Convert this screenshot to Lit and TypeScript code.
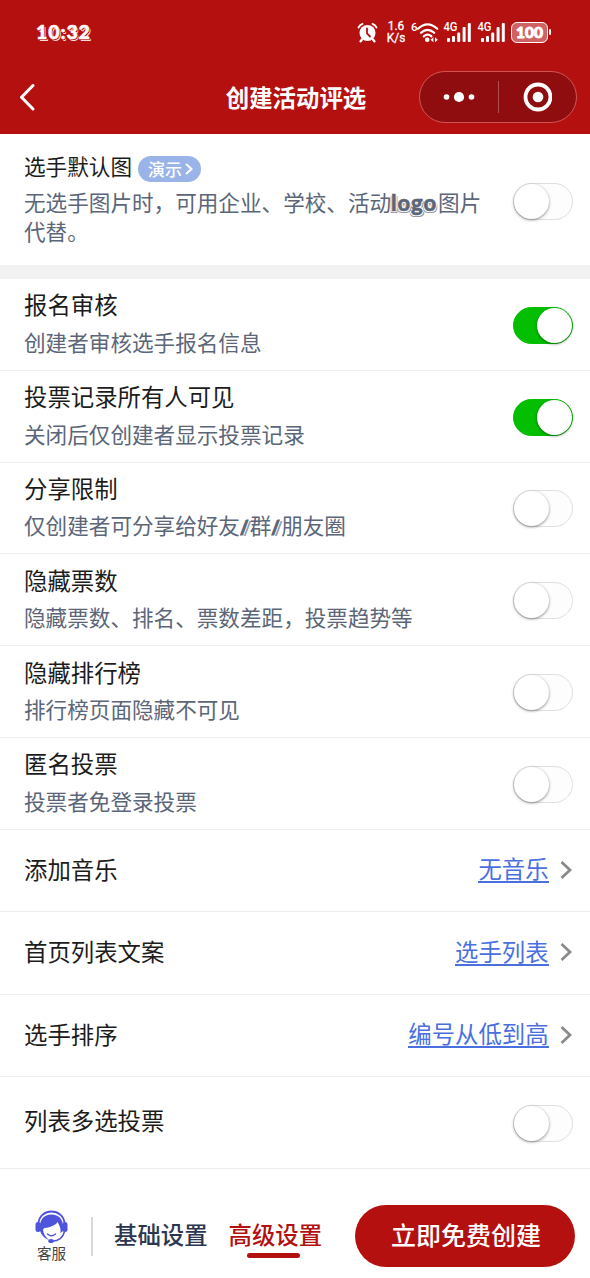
import { LitElement, html, svg, css, nothing } from "lit";
import { customElement, property } from "lit/decorators.js";
import { classMap } from "lit/directives/class-map.js";

const FONT = css`"Noto Sans CJK SC", "Noto Sans", sans-serif`;

@customElement("toggle-switch")
class ToggleSwitch extends LitElement {
  @property({ type: Boolean }) on = false;

  static styles = css`
    :host { display: block; flex: none; }
    .track {
      box-sizing: border-box;
      display: flex;
      width: 60px;
      height: 37px;
      border-radius: 19px;
      border: 1px solid #dfdfdf;
      background: #fdfdfd;
    }
    .knob {
      width: 35px;
      height: 35px;
      border-radius: 50%;
      background: #fff;
      box-shadow: 0 1px 3px rgba(0, 0, 0, 0.45);
    }
    .on { justify-content: flex-end; background: #04be02; border-color: #04be02; }
  `;

  render() {
    return html`<div class=${classMap({ track: true, on: this.on })}><div class="knob"></div></div>`;
  }
}

@customElement("status-bar")
class StatusBar extends LitElement {
  static styles = css`
    :host {
      display: flex;
      align-items: center;
      justify-content: space-between;
      height: 64px;
      padding: 0 39px 0 36px;
      color: #fff;
      font-family: Roboto, sans-serif;
    }
    .time {
      font: 900 19.5px/20px Lato, sans-serif;
      letter-spacing: 0.9px;
      -webkit-text-stroke: 0.5px #fff;
      text-shadow: 1px 1px 0 #b51010, 1.7px 1.5px 0 #ffdcdc;
    }
    .icons { display: flex; align-items: center; }
    .alarm { width: 21px; height: 21px; }
    .speed {
      display: flex;
      flex-direction: column;
      align-items: center;
      width: 24px;
      margin-left: 6px;
      font-size: 12px;
      -webkit-text-stroke: 0.3px #fff;
    }
    .speed span { display: block; line-height: 12px; height: 12px; overflow: hidden; }
    .wifi { width: 27px; height: 21px; margin-left: 4px; overflow: visible; }
    .signal { width: 28px; height: 21px; margin-left: 6px; overflow: visible; }
    .glyph { font: 500 12.5px Roboto, sans-serif; fill: #fff; }
    .small { font-size: 11.5px; }
    .battery { display: flex; align-items: center; margin-left: 4px; }
    .cell {
      box-sizing: border-box;
      width: 37px;
      height: 21px;
      border: 1.5px solid #fff;
      border-radius: 6px;
      background: rgba(255, 255, 255, 0.35);
      font: 900 15.5px/18px Lato, sans-serif;
      letter-spacing: 0;
      text-align: center;
      -webkit-text-stroke: 0.9px #fff;
    }
    .tip { width: 2px; height: 6px; margin-left: 1px; border-radius: 1px; background: #fff; }
  `;

  private signal() {
    return html`<svg class="signal" viewBox="0 0 28 21">
      <text class="glyph" x="-1.5" y="9" textLength="14" lengthAdjust="spacingAndGlyphs">4G</text>
      ${[[2, 16], [7, 14], [12.2, 10.5], [17.6, 5], [22.8, 1]].map(
        ([x, y]) => svg`<rect x=${x} y=${y} width="3" height=${20 - y} rx="1" fill="#fff"/>`
      )}
    </svg>`;
  }

  render() {
    return html`
      <span class="time">10:32</span>
      <div class="icons">
        <svg class="alarm" viewBox="0 0 21 21" fill="none" stroke="#fff" stroke-linecap="round">
          <circle cx="10.5" cy="11" r="8" fill="#fff" stroke="none"/>
          <path d="M1.5 5.5Q2.8 2.8 5.5 1.8M19.5 5.5Q18.2 2.8 15.5 1.8" stroke-width="1.8"/>
          <path d="M5 17.5L3.6 19.2M16 17.5L17.4 19.2" stroke-width="2.4"/>
          <path d="M10 6.5V11.5L13 14.5" stroke="#b51010" stroke-width="1.8"/>
        </svg>
        <div class="speed"><span>1.6</span><span>K/s</span></div>
        <svg class="wifi" viewBox="0 0 27 21" fill="none" stroke="#fff">
          <text class="glyph small" x="-1" y="8.5" stroke="none">6</text>
          <path d="M6 6.8Q15.5 -2 25.3 6.8M9 10.8Q15.5 4.8 22.2 10.8M11.8 14.4Q15.5 11 19.4 14.4" stroke-width="2.2" stroke-linecap="round"/>
          <circle cx="15.2" cy="17.8" r="2.3" fill="#fff" stroke="none"/>
          <path d="M18.6 17.7L21.4 15.2V20.2ZM25.8 17.7L23 15.2V20.2Z" fill="#fff" stroke="none"/>
        </svg>
        ${this.signal()}${this.signal()}
        <div class="battery"><div class="cell">100</div><div class="tip"></div></div>
      </div>
    `;
  }
}

@customElement("nav-bar")
class NavBar extends LitElement {
  static styles = css`
    :host {
      display: grid;
      grid-template-columns: 1fr auto 1fr;
      align-items: center;
      height: 70px;
      padding: 0 13px 4px 19px;
      box-sizing: border-box;
      color: #fff;
      font-family: ${FONT};
    }
    .back { width: 17px; height: 28px; }
    .title { font-size: 23.4px; line-height: 34px; font-weight: 700; margin: -1px 4px 0 0; }
    .capsule {
      justify-self: end;
      box-sizing: border-box;
      display: flex;
      align-items: center;
      width: 158px;
      height: 52px;
      border: 1px solid #cf5556;
      border-radius: 26px;
      background: #900d0f;
    }
    .half { flex: 1; display: flex; justify-content: center; padding-right: 2px; }
    .half:last-child { padding-right: 0; }
    .divider { width: 1px; height: 32px; background: #b05050; margin-left: -2px; }
  `;

  render() {
    return html`
      <svg class="back" viewBox="0 0 17 28" fill="none" stroke="#fff" stroke-width="3" stroke-linecap="round" stroke-linejoin="round">
        <path d="M14 2.5L2.5 14.3L14 26"/>
      </svg>
      <span class="title">创建活动评选</span>
      <div class="capsule">
        <div class="half">
          <svg width="32" height="12" viewBox="0 0 32 12" fill="#fff">
            <circle cx="3.5" cy="6" r="2.8"/><circle cx="16" cy="6" r="5.1"/><circle cx="28.5" cy="6" r="2.8"/>
          </svg>
        </div>
        <div class="divider"></div>
        <div class="half">
          <svg width="30" height="30" viewBox="0 0 30 30">
            <circle cx="16" cy="15" r="12.5" fill="none" stroke="#fff" stroke-width="3.8"/>
            <circle cx="16" cy="15" r="5.3" fill="#fff"/>
          </svg>
        </div>
      </div>
    `;
  }
}

type Row = { title: string; desc?: unknown; on?: boolean; value?: string };

const ROWS: Row[] = [
  { title: "报名审核", desc: "创建者审核选手报名信息", on: true },
  { title: "投票记录所有人可见", desc: "关闭后仅创建者显示投票记录", on: true },
  {
    title: "分享限制",
    desc: html`仅创建者可分享给好友<span class="slash">/</span>群<span class="slash">/</span>朋友圈`,
  },
  { title: "隐藏票数", desc: "隐藏票数、排名、票数差距，投票趋势等" },
  { title: "隐藏排行榜", desc: "排行榜页面隐藏不可见" },
  { title: "匿名投票", desc: "投票者免登录投票" },
  { title: "添加音乐", value: "无音乐" },
  { title: "首页列表文案", value: "选手列表" },
  { title: "选手排序", value: "编号从低到高" },
  { title: "列表多选投票" },
];

@customElement("app-root")
class AppRoot extends LitElement {
  static styles = css`
    :host {
      display: flex;
      flex-direction: column;
      height: 1278px;
      overflow: hidden;
      background: #fff;
      color: #1c1c1c;
      font-family: ${FONT};
      white-space: nowrap;
    }
    .head { height: 134px; flex: none; background: #b51010; }
    .intro {
      box-sizing: border-box;
      flex: none;
      display: flex;
      justify-content: space-between;
      height: 145px;
      padding: 17px 17.5px 0 24px;
      border-bottom: 14px solid #f2f2f2;
    }
    .intro toggle-switch { margin-top: 32px; }
    .intro-title { display: flex; align-items: center; height: 32px; gap: 6px; font-size: 21.6px; }
    .label { line-height: 32px; margin-top: -3px; }
    .pill {
      box-sizing: border-box;
      display: flex;
      align-items: center;
      height: 26px;
      width: 63px;
      margin-top: 4px;
      padding: 0 0 1px 10px;
      gap: 3px;
      border-radius: 13px;
      background: #9ab4ea;
      color: #fff;
      font-size: 17px;
      line-height: 24px;
      font-weight: 500;
    }
    .desc { color: #5b6678; font-size: 21.6px; line-height: 28.5px; }
    .intro .desc { margin-top: 5px; }
    .logo, .slash {
      font-family: Lato, sans-serif;
      font-weight: 900;
      text-shadow: 1px 1px 0 #fff, -1px 1px 0 #fff, 1px -1px 0 #fff, 1.8px 1.8px 0 #9299a6, -1.5px 1.5px 0 #9299a6;
    }
    .logo {
      display: inline-block;
      width: 47px;
      font-size: 22px;
      letter-spacing: 0.9px;
      line-height: 20px;
      -webkit-text-stroke: 0.5px #5b6678;
    }
    .slash {
      display: inline-block;
      width: 9.8px;
      line-height: 18px;
      font-size: 18px;
      -webkit-text-stroke: 1px #5b6678;
      text-shadow: 1.5px 0 0 #fff, 3px 0.5px 0 #9299a6;
    }
    .row {
      box-sizing: border-box;
      flex: none;
      display: flex;
      align-items: center;
      justify-content: space-between;
      height: 91.8px;
      padding: 0 17.5px 0 24px;
      border-bottom: 1.5px solid #ededed;
    }
    .row.link { height: 82.5px; padding-right: 18.4px; }
    .title { font-size: 23.4px; line-height: 34px; }
    .row .desc { margin-top: 6.5px; }
    .text { margin-top: -5px; }
    .row toggle-switch { margin-top: 2px; }
    .link .text { margin-top: -4px; }
    .value { display: flex; align-items: center; gap: 11px; color: #4a70df; font-size: 23.4px; margin-top: -2px; }
    .underlined { line-height: 26px; height: 26px; border-bottom: 2px solid #4a70df; margin-top: -1px; }
    .foot { flex: 1; display: flex; align-items: center; padding: 26px 15px 0 35px; }
    .service {
      display: flex;
      flex-direction: column;
      align-items: center;
      width: 33px;
      margin-top: -3px;
      font-size: 14.6px;
      line-height: 17px;
      color: #444;
    }
    .bar { width: 2px; height: 39px; margin: 0 21px 0 23px; background: #d8d8d8; }
    .tab {
      display: flex;
      flex-direction: column;
      align-items: center;
      gap: 1px;
      height: 44px;
      margin: 4px 21px 0 0;
      color: #2c3650;
      font-size: 23.4px;
      line-height: 35px;
      font-weight: 500;
    }
    .active { color: #b51010; }
    .mark { width: 53px; height: 5px; border-radius: 3px; background: #b51010; margin-right: 3px; }
    .submit {
      flex: none;
      width: 220px;
      height: 62px;
      margin: -2px 0 0 auto;
      border: 0;
      border-radius: 31px;
      background: #b51010;
      color: #fff;
      font: 500 25px/58px ${FONT};
      padding: 0 0 4px 2px;
    }
  `;

  private row(r: Row) {
    return html`<div class=${classMap({ row: true, link: !!r.value })}>
      <div class="text">
        <div class="title">${r.title}</div>
        ${r.desc ? html`<div class="desc">${r.desc}</div>` : nothing}
      </div>
      ${r.value
        ? html`<div class="value">
            <span class="underlined">${r.value}</span>
            <svg width="12" height="20" viewBox="0 0 12 20" fill="none" stroke="#8a8a8a" stroke-width="2.8">
              <path d="M1.5 2L10 10L1.5 18"/>
            </svg>
          </div>`
        : html`<toggle-switch ?on=${r.on}></toggle-switch>`}
    </div>`;
  }

  render() {
    return html`
      <div class="head"><status-bar></status-bar><nav-bar></nav-bar></div>
      <div class="intro">
        <div>
          <div class="intro-title">
            <span class="label">选手默认图</span>
            <span class="pill">演示<svg width="8" height="12" viewBox="0 0 8 12" fill="none" stroke="#fff" stroke-width="2"><path d="M1 1L6.5 6L1 11"/></svg></span>
          </div>
          <div class="desc">无选手图片时，可用企业、学校、活动<span class="logo">logo</span>图片<br />代替。</div>
        </div>
        <toggle-switch></toggle-switch>
      </div>
      ${ROWS.map((r) => this.row(r))}
      <div class="foot">
        <div class="service">
          <svg width="33" height="34" viewBox="0 0 33 34">
            <path d="M3.5 13.5C4.5 -2.5 28.5 -2.5 29.5 13.5" fill="none" stroke="#4e54dc" stroke-width="1.8"/>
            <rect x="0.5" y="12" width="5" height="10" rx="2.5" fill="#4e54dc"/>
            <rect x="27.5" y="12" width="5" height="10" rx="2.5" fill="#4e54dc"/>
            <path d="M5 21C3.5 11 8 4.5 16.5 4.5S29.5 11 28 21L25.5 23C26 18 24.5 15.5 22.5 12C20 16 14 17.5 9.5 18C8 19 7.5 20.5 8 23Z" fill="#4e54dc"/>
            <path d="M5 20C6 25 9.5 28.5 14 30C10.5 27 8.5 24 8 20Z" fill="#4e54dc"/>
            <path d="M12.5 24Q16.5 27.5 20.5 24" fill="none" stroke="#4e54dc" stroke-width="1.4" stroke-linecap="round"/>
            <path d="M29.5 21.5C28 28 23 31 17 31.2" fill="none" stroke="#4e54dc" stroke-width="1.5"/>
            <ellipse cx="16" cy="31" rx="2.8" ry="2" fill="#4e54dc"/>
          </svg>
          <span>客服</span>
        </div>
        <div class="bar"></div>
        <div class="tab">基础设置</div>
        <div class="tab active">高级设置<div class="mark"></div></div>
        <button class="submit">立即免费创建</button>
      </div>
    `;
  }
}
